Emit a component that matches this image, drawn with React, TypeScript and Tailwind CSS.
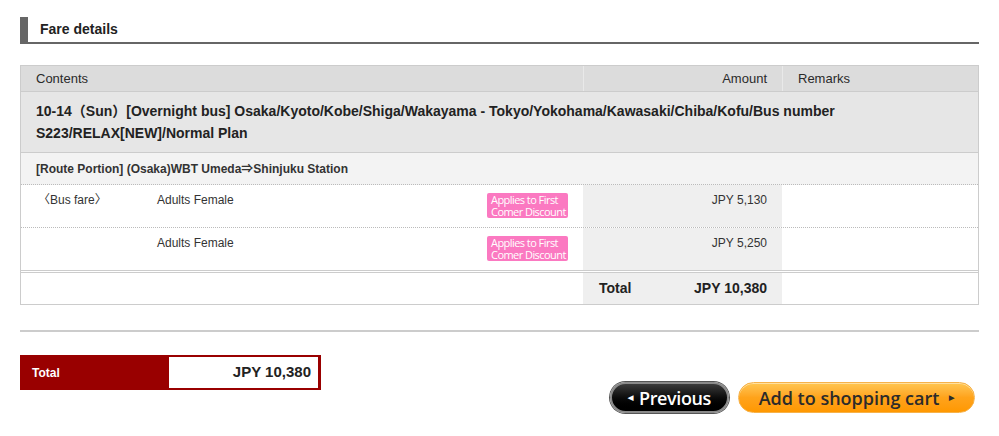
import React from 'react';

interface FareLine {
  label: string;
  type: string;
  amount: string;
}

const fareLines: FareLine[] = [
  { label: '〈Bus fare〉', type: 'Adults Female', amount: 'JPY 5,130' },
  { label: '', type: 'Adults Female', amount: 'JPY 5,250' },
];

const DiscountBadge: React.FC = () => (
  <div className="w-[81px] h-[25px] rounded-[2px] bg-[#fb79c1] pl-[4px] pt-px text-white text-[11px] leading-[12px] tracking-[-0.55px] font-['Open_Sans',sans-serif] whitespace-nowrap overflow-hidden">
    <div>Applies to First</div>
    <div>Comer Discount</div>
  </div>
);

export default function App() {
  return (
    <div className="bg-white px-[20px] pt-[17px] pb-[23px] text-[#333] font-['Liberation_Sans','Noto_Sans_CJK_JP',sans-serif]">
      {/* Section heading */}
      <div className="h-[27px] border-l-8 border-b-2 border-[#666] pl-[12px]">
        <h2 className="text-[14px] font-bold leading-[25px] text-[#222]">Fare details</h2>
      </div>

      {/* Fare table */}
      <div className="mt-[21px] border border-[#ccc]">
        {/* Header */}
        <div className="flex h-[26px] bg-[#dcdcdc] border-b border-[#ccc] text-[13px] items-center text-[#2a2a2a]">
          <div className="flex-1 pl-[15px]">Contents</div>
          <div className="w-[199px] h-full flex items-center justify-end pr-[15px] border-l border-[#e9e9e9]">Amount</div>
          <div className="w-[196px] h-full flex items-center pl-[15px] border-l border-[#e9e9e9]">Remarks</div>
        </div>

        {/* Trip title */}
        <div className="bg-[#e6e6e6] border-b border-[#ccc] px-[15px] py-[8px] text-[14px] font-bold leading-[22px] text-[#222]">
          10-14（Sun）[Overnight bus] Osaka/Kyoto/Kobe/Shiga/Wakayama - Tokyo/Yokohama/Kawasaki/Chiba/Kofu/Bus number S223/RELAX[NEW]/Normal Plan
        </div>

        {/* Route portion */}
        <div className="h-[32px] flex items-center bg-[#f3f3f3] border-b border-dotted border-[#bbb] px-[15px] text-[12px] font-bold text-[#333]">
          [Route Portion] (Osaka)WBT Umeda⇒Shinjuku Station
        </div>

        {/* Fare lines */}
        {fareLines.map((line, i) => (
          <div
            key={i}
            className={
              i === fareLines.length - 1
                ? 'flex h-[45px] border-b-[3px] border-double border-[#ccc] text-[12px]'
                : 'flex h-[43px] border-b border-dotted border-[#bbb] text-[12px]'
            }
          >
            <div className="flex-1 flex pr-[15px] pt-[8px]">
              <div className="w-[136px] pl-[17px] leading-[14px]">{line.label}</div>
              <div className="flex-1 leading-[14px]">{line.type}</div>
              <DiscountBadge />
            </div>
            <div className="w-[199px] bg-[#efefef] text-right pr-[15px] pt-[8px] leading-[14px]">{line.amount}</div>
            <div className="w-[196px]" />
          </div>
        ))}

        {/* Table total */}
        <div className="flex h-[31px] text-[14px] font-bold text-[#222]">
          <div className="flex-1" />
          <div className="w-[199px] bg-[#efefef] flex items-center justify-between pl-[16px] pr-[15px]">
            <span>Total</span>
            <span>JPY 10,380</span>
          </div>
          <div className="w-[196px]" />
        </div>
      </div>

      <div className="mt-[25px] h-[2px] bg-[#ccc]" />

      {/* Grand total and actions */}
      <div className="flex items-start mt-[23px]">
        <div className="flex w-[301px] h-[35px] bg-[#990000] py-[2px] pr-[3px]">
          <div className="w-[149px] flex items-center pl-[12px] text-white text-[12px] font-bold">Total</div>
          <div className="flex-1 bg-white flex items-center justify-end pr-[7px] text-[15px] font-bold text-[#222]">
            JPY 10,380
          </div>
        </div>

        <div className="ml-auto mr-[4px] mt-[27px] flex gap-[9px] font-['Open_Sans',sans-serif] font-semibold">
          <button className="w-[119px] h-[31px] rounded-full border-2 border-[#8a8a8a] bg-gradient-to-b from-[#3c3c3c] via-[#0d0d0d] to-black text-white text-[18px] leading-none flex items-center justify-center gap-[6px] shadow-[0_0_0_1px_#555]">
            <span className="text-[7px]">◀</span>
            <span className="tracking-[-0.4px]">Previous</span>
          </button>
          <button className="w-[237px] h-[31px] rounded-full border border-[#f6b24a] bg-gradient-to-b from-[#ffc64f] via-[#ffa31a] to-[#ff9800] text-[#2b2b2b] text-[18px] leading-none flex items-center justify-center gap-[10px] shadow-[inset_0_1px_0_#ffe0a0]">
            <span>Add to shopping cart</span>
            <span className="text-[7px]">▶</span>
          </button>
        </div>
      </div>
    </div>
  );
}
